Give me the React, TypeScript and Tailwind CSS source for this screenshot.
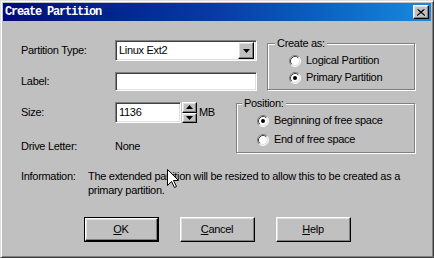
import type { ReactNode } from 'react'

// classic 3D bevels
const raised =
  'border border-t-white border-l-white border-r-black border-b-black bg-[#c0c0c0] shadow-[inset_-1px_-1px_#808080,inset_1px_1px_#dfdfdf]'
const sunken =
  'border border-t-[#808080] border-l-[#808080] border-r-white border-b-white bg-white shadow-[inset_1px_1px_#404040,inset_-1px_-1px_#dfdfdf]'
const groupBox =
  'm-0 border border-[#808080] p-0 shadow-[1px_1px_#fff,inset_1px_1px_#fff]'

function Radio({ checked, label }: { checked?: boolean; label: string }) {
  return (
    <div className="flex h-[13px] items-center gap-[5px]">
      <svg width="12" height="12" viewBox="0 0 12 12" className="shrink-0" aria-hidden="true">
        <circle cx="6" cy="6" r="5" fill="#fff" />
        <path d="M2.11 9.89A5.5 5.5 0 0 1 9.89 2.11" stroke="#808080" fill="none" />
        <path d="M9.89 2.11A5.5 5.5 0 0 1 2.11 9.89" stroke="#fff" fill="none" />
        <path d="M2.82 9.18A4.5 4.5 0 0 1 9.18 2.82" stroke="#404040" fill="none" />
        <path d="M9.18 2.82A4.5 4.5 0 0 1 2.82 9.18" stroke="#dfdfdf" fill="none" />
        {checked && <circle cx="6" cy="6" r="2" fill="#000" />}
      </svg>
      <span>{label}</span>
    </div>
  )
}

function Arrow({ up }: { up?: boolean }) {
  return (
    <svg width="7" height="4" viewBox="0 0 7 4" aria-hidden="true">
      <path d={up ? 'M3.5 0L7 4H0Z' : 'M0 0H7L3.5 4Z'} fill="#000" />
    </svg>
  )
}

function Row({ label, children }: { label: string; children: ReactNode }) {
  return (
    <div className="flex items-center">
      <span className="w-[94px] shrink-0">{label}</span>
      {children}
    </div>
  )
}

function Btn({ children, isDefault }: { children: ReactNode; isDefault?: boolean }) {
  if (isDefault) {
    return (
      <div className="h-[25px] w-[75px] border border-black">
        <div className={`flex h-full w-full items-center justify-center ${raised}`}>{children}</div>
      </div>
    )
  }
  return <div className={`flex h-[25px] w-[75px] items-center justify-center ${raised}`}>{children}</div>
}

export default function App() {
  return (
    <div className="relative h-[258px] w-[434px] overflow-hidden border border-t-[#dfdfdf] border-l-[#dfdfdf] border-r-[#404040] border-b-[#404040] bg-[#c0c0c0] p-[2px] font-[family-name:'Liberation_Sans',Arial,sans-serif] text-[11px] leading-[13px] tracking-[-0.3px] text-black shadow-[inset_1px_1px_#fff,inset_-1px_-1px_#808080]">
      {/* title bar */}
      <div className="flex h-[18px] items-center justify-between bg-gradient-to-r from-[#000a78] via-[#0a3aa6] to-[#1a8ade] pl-[2px] pr-[2px]">
        <span className="font-[family-name:'Liberation_Mono','Courier_New',monospace] text-[12px] font-bold tracking-[-1.2px] text-white">
          Create Partition
        </span>
        <div className={`flex h-[14px] w-[16px] items-center justify-center ${raised}`}>
          <svg width="8" height="7" viewBox="0 0 8 7" aria-hidden="true">
            <path d="M0.5 0.5L7.5 6.5M1.5 0.5L8 6.5M7.5 0.5L0.5 6.5M6.5 0.5L0 6.5" stroke="#000" strokeWidth="1" />
          </svg>
        </div>
      </div>

      {/* body */}
      <div className="pt-[16px]">
        {/* type / label + create as */}
        <div className="flex items-start pl-[18px]">
          <div className="mt-[3px] w-[236px]">
            <Row label="Partition Type:">
              <div className={`flex h-[21px] w-[142px] items-center justify-between pl-[3px] pr-[2px] ${sunken}`}>
                <span>Linux Ext2</span>
                <div className={`flex h-[17px] w-[16px] items-center justify-center ${raised}`}>
                  <Arrow />
                </div>
              </div>
            </Row>
            <div className="mt-[11px]">
              <Row label="Label:">
                <div className={`h-[19px] w-[142px] ${sunken}`} />
              </Row>
            </div>
          </div>
          <fieldset className={`ml-[10px] w-[148px] ${groupBox}`}>
            <legend className="ml-[7px] bg-[#c0c0c0] px-[2px]">Create as:</legend>
            <div className="flex flex-col gap-[4px] pt-[4px] pb-[5px] pl-[21px]">
              <Radio label="Logical Partition" />
              <Radio checked label="Primary Partition" />
            </div>
          </fieldset>
        </div>

        {/* size / drive letter + position */}
        <div className="mt-[6px] flex items-start pl-[18px]">
          <div className="mt-[5px] w-[215px]">
            <Row label="Size:">
              <div className={`flex h-[21px] w-[66px] items-center pl-[3px] ${sunken}`}>1136</div>
              <div className="ml-[1px] flex h-[21px] w-[15px] flex-col">
                <div className={`flex flex-1 items-center justify-center ${raised}`}>
                  <Arrow up />
                </div>
                <div className={`flex flex-1 items-center justify-center ${raised}`}>
                  <Arrow />
                </div>
              </div>
              <span className="ml-[2px]">MB</span>
            </Row>
            <div className="mt-[17px]">
              <Row label="Drive Letter:">
                <span>None</span>
              </Row>
            </div>
          </div>
          <fieldset className={`w-[179px] ${groupBox}`}>
            <legend className="ml-[5px] bg-[#c0c0c0] px-[2px]">Position:</legend>
            <div className="flex flex-col gap-[6px] pt-[4px] pb-[6px] pl-[20px]">
              <Radio checked label="Beginning of free space" />
              <Radio label="End of free space" />
            </div>
          </fieldset>
        </div>

        {/* information */}
        <div className="mt-[16px] flex pl-[18px] leading-[14px]">
          <span className="w-[67px] shrink-0">Information:</span>
          <p className="w-[332px]">
            The extended partition will be resized to allow this to be created as a primary partition.
          </p>
        </div>

        {/* buttons */}
        <div className="mt-[20px] flex justify-center gap-[21px]">
          <Btn isDefault>
            <span>
              <u>O</u>K
            </span>
          </Btn>
          <Btn>
            <span>
              <u>C</u>ancel
            </span>
          </Btn>
          <Btn>
            <span>
              <u>H</u>elp
            </span>
          </Btn>
        </div>
      </div>

      {/* mouse pointer */}
      <svg
        className="absolute left-[166px] top-[168px]"
        width="13"
        height="20"
        viewBox="0 0 13 20"
        aria-hidden="true"
      >
        <path d="M0.5 0.5V16.5L4.5 12.5L7.5 18.5L9.5 17.5L6.5 11.5H11.5Z" fill="#fff" stroke="#000" />
      </svg>
    </div>
  )
}
